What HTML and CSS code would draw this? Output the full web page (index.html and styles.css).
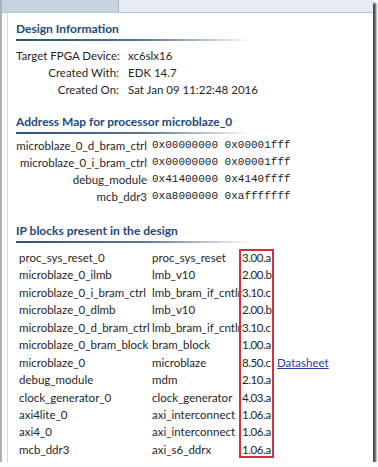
FILE: index.html
```html
<!DOCTYPE html>
<html>
<head>
<meta charset="utf-8">
<link rel="stylesheet" href="styles.css">
</head>
<body>
<div class="window">
  <div class="tabbar"><div class="tab"></div></div>
  <div class="panel">
    <h2 class="heading">Design Information</h2>
    <div class="rule"></div>
    <div class="info">
      <div class="lbl">Target FPGA Device:</div><div>xc6slx16</div>
      <div class="lbl">Created With:</div><div>EDK 14.7</div>
      <div class="lbl">Created On:</div><div>Sat Jan 09 11:22:48 2016</div>
    </div>

    <h2 class="heading h-gap">Address Map for processor microblaze_0</h2>
    <div class="rule"></div>
    <div class="addr">
      <div class="lbl">microblaze_0_d_bram_ctrl</div><div class="mono">0x00000000 0x00001fff</div>
      <div class="lbl">microblaze_0_i_bram_ctrl</div><div class="mono">0x00000000 0x00001fff</div>
      <div class="lbl">debug_module</div><div class="mono">0x41400000 0x4140ffff</div>
      <div class="lbl">mcb_ddr3</div><div class="mono">0xa8000000 0xafffffff</div>
    </div>

    <h2 class="heading h-gap2">IP blocks present in the design</h2>
    <div class="rule"></div>
    <div class="ipwrap">
      <div class="ip">
        <div>proc_sys_reset_0</div><div>proc_sys_reset</div><div class="ver">3.00.a</div><div></div>
        <div>microblaze_0_ilmb</div><div>lmb_v10</div><div class="ver">2.00.b</div><div></div>
        <div>microblaze_0_i_bram_ctrl</div><div class="clip">lmb_bram_if_cntlr</div><div class="ver">3.10.c</div><div></div>
        <div>microblaze_0_dlmb</div><div>lmb_v10</div><div class="ver">2.00.b</div><div></div>
        <div>microblaze_0_d_bram_ctrl</div><div class="clip">lmb_bram_if_cntlr</div><div class="ver">3.10.c</div><div></div>
        <div>microblaze_0_bram_block</div><div>bram_block</div><div class="ver">1.00.a</div><div></div>
        <div>microblaze_0</div><div>microblaze</div><div class="ver">8.50.c</div><div><a class="link" href="#">Datasheet</a></div>
        <div>debug_module</div><div>mdm</div><div class="ver">2.10.a</div><div></div>
        <div>clock_generator_0</div><div>clock_generator</div><div class="ver">4.03.a</div><div></div>
        <div>axi4lite_0</div><div>axi_interconnect</div><div class="ver">1.06.a</div><div></div>
        <div>axi4_0</div><div>axi_interconnect</div><div class="ver">1.06.a</div><div></div>
        <div>mcb_ddr3</div><div>axi_s6_ddrx</div><div class="ver">1.06.a</div><div></div>
      </div>
      <div class="redbox"></div>
    </div>
  </div>
</div>
</body>
</html>
```
FILE: styles.css
```css
html, body {
  margin: 0;
  padding: 0;
  background: #ffffff;
}
.window {
  width: 371px;
  height: 462px;
  border-left: 2px solid #a9b0b8;
  background: #ffffff;
  box-shadow: 3px 3px 2px #4a4a4a;
  font-family: Lato, "Noto Sans", sans-serif;
  color: #262626;
  overflow: hidden;
  display: flex;
  flex-direction: column;
}
.tabbar {
  flex-shrink: 0;
  height: 12px;
  background: #e5edf7;
  border-bottom: 1px solid #b9c4d1;
  display: flex;
}
.tab {
  width: 116px;
  background: #c8d3e0;
  border-right: 1px solid #aab6c4;
}
.panel {
  flex: 1 0 auto;
  margin-left: 5px;
  border-left: 1px solid #d4d8dc;
  padding-left: 8px;
}
.heading {
  margin: 8px 0 0 0;
  font-size: 12px;
  font-weight: bold;
  line-height: 16px;
  color: #23497a;
}
.h-gap {
  margin-top: 16px;
}
.h-gap2 {
  margin-top: 18px;
}
.rule {
  margin-top: 2px;
  width: 236px;
  height: 2px;
  background: linear-gradient(to right, #2c4f7c 0%, #5d7896 55%, rgba(120,140,165,0) 100%);
}
.info {
  margin-top: 6px;
  display: grid;
  grid-template-columns: 103px auto;
  column-gap: 9px;
  font-size: 11.5px;
  line-height: 17px;
  white-space: nowrap;
}
.lbl {
  text-align: right;
  white-space: nowrap;
}
.addr {
  margin-top: 3px;
  display: grid;
  grid-template-columns: 131px auto;
  column-gap: 5px;
  font-size: 11.5px;
  line-height: 17px;
}
.mono {
  font-family: "Liberation Mono", "DejaVu Sans Mono", monospace;
  font-size: 11px;
  color: #222;
}
.ipwrap {
  position: relative;
  margin-top: 6px;
}
.ip {
  display: grid;
  grid-template-columns: 133px 90px 35px auto;
  grid-auto-rows: 17.45px;
  padding-left: 3px;
  font-size: 11.5px;
  line-height: 17.45px;
  white-space: nowrap;
}
.ver {
  letter-spacing: -0.4px;
}
.clip {
  overflow: hidden;
}
.link {
  color: #2b3a9e;
  text-decoration: underline;
}
.redbox {
  position: absolute;
  left: 223px;
  top: 0;
  width: 31px;
  height: 205px;
  border: 2px solid #d4313a;
}
```
